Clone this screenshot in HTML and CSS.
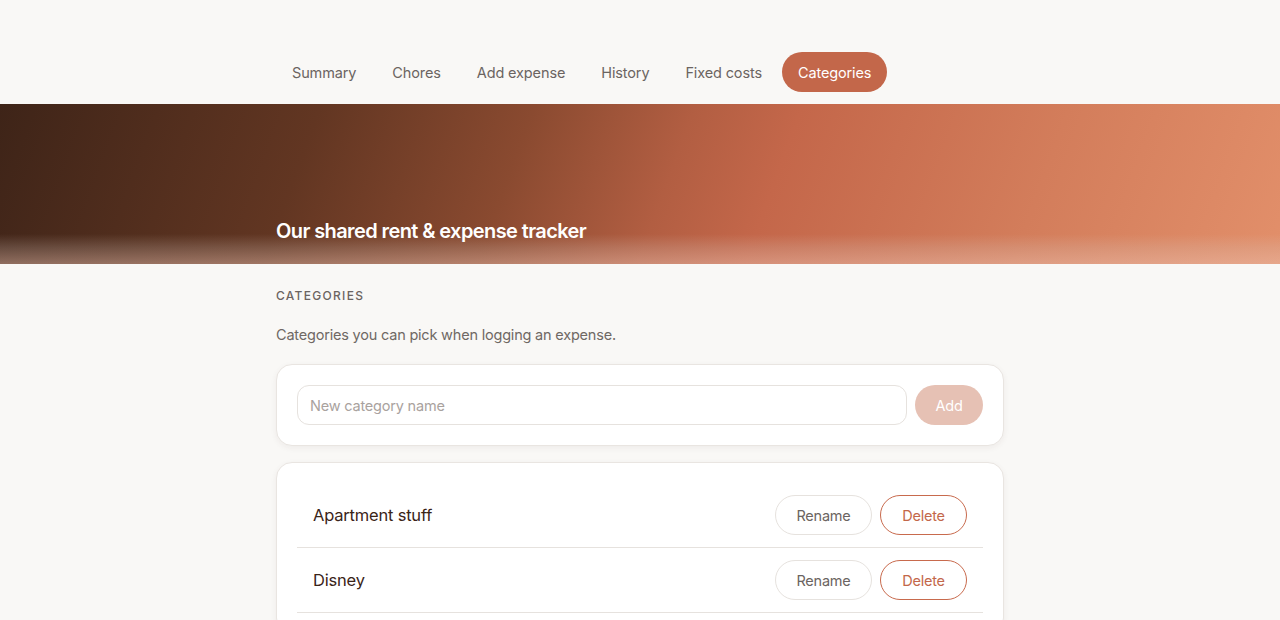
FILE: index.html
```html
<!DOCTYPE html>
<html lang="en">
<head>
    <meta charset="UTF-8">
    <meta name="viewport" content="width=device-width, initial-scale=1.0">
    <title>Rent &amp; Expenses</title>
    <link rel="stylesheet" href="styles.css">
</head>
<body>

    <!-- Top navigation -->
    <header class="topbar">
        <nav class="tabs">
            <a href="#" class="tab">Summary</a>
            <a href="#" class="tab">Chores</a>
            <a href="#" class="tab">Add expense</a>
            <a href="#" class="tab">History</a>
            <a href="#" class="tab">Fixed costs</a>
            <a href="#" class="tab active">Categories</a>
        </nav>
    </header>

    <!-- Hero -->
    <section class="hero">
        <div class="hero-inner">
            <h1>Our shared rent &amp; expense tracker</h1>
        </div>
    </section>

    <!-- Categories -->
    <main class="content">
        <h2 class="section-label">Categories</h2>
        <p class="section-desc">Categories you can pick when logging an expense.</p>

        <div class="card add-card">
            <input type="text" class="text-input" placeholder="New category name">
            <button class="btn btn-add">Add</button>
        </div>

        <div class="card list-card">
            <ul class="cat-list">
                <li class="cat-row">
                    <span class="cat-name">Apartment stuff</span>
                    <div class="cat-actions">
                        <button class="btn btn-ghost">Rename</button>
                        <button class="btn btn-danger">Delete</button>
                    </div>
                </li>
                <li class="cat-row">
                    <span class="cat-name">Disney</span>
                    <div class="cat-actions">
                        <button class="btn btn-ghost">Rename</button>
                        <button class="btn btn-danger">Delete</button>
                    </div>
                </li>
            </ul>
        </div>
    </main>

</body>
</html>
```

FILE: styles.css
```css
/* Warm off-white theme */
body {
    background-color: #f9f8f6;
    color: #3a2a22;
    font-family: Inter, "Noto Sans", sans-serif;
    margin: 0;
}

/* Top navigation */
.topbar {
    height: 104px;
    box-sizing: border-box;
    padding-top: 52px;
}

.tabs {
    width: 728px;
    margin: 0 auto;
    display: flex;
    gap: 4px;
}

.tab {
    height: 40px;
    line-height: 41px;
    padding: 0 16px;
    border-radius: 20px;
    color: #6b6461;
    font-size: 14.5px;
    letter-spacing: -0.13px;
    text-decoration: none;
}

.tab.active {
    background-color: #c3674a;
    color: #fff;
}

/* Hero */
.hero {
    height: 160px;
    position: relative;
    background: linear-gradient(110deg, #3e2418 0%, #623622 24%, #8a4a30 40%, #b25e42 52%, #c4674a 60%, #d37d5b 80%, #e28f6a 100%);
}

.hero::after {
    content: "";
    position: absolute;
    left: 0;
    right: 0;
    bottom: 0;
    height: 30px;
    background: linear-gradient(180deg, rgba(220, 200, 190, 0) 0%, rgba(220, 200, 190, 0.22) 45%, rgba(236, 196, 180, 0.45) 100%);
}

.hero-inner {
    width: 728px;
    margin: 0 auto;
    height: 100%;
    display: flex;
    align-items: flex-end;
}

.hero h1 {
    margin: 0 0 21px;
    color: #fff;
    font-size: 20px;
    font-weight: 600;
    letter-spacing: -0.6px;
    position: relative;
    z-index: 1;
}

/* Content */
.content {
    width: 728px;
    margin: 0 auto;
    padding-top: 24px;
}

.section-label {
    margin: 0;
    font-size: 12px;
    font-weight: 500;
    letter-spacing: 1.3px;
    text-transform: uppercase;
    color: #6b6461;
}

.section-desc {
    margin: 23px 0 21px;
    font-size: 14.5px;
    letter-spacing: -0.2px;
    color: #6f6864;
}

.card {
    background: #fff;
    border: 1px solid #e9e5e1;
    border-radius: 16px;
    box-shadow: 0 2px 6px rgba(60, 40, 30, 0.06);
    padding: 20px;
    margin-bottom: 16px;
}

.add-card {
    display: flex;
    gap: 8px;
}

.text-input {
    flex: 1;
    height: 40px;
    box-sizing: border-box;
    border: 1px solid #e6e2de;
    border-radius: 12px;
    padding: 0 12px;
    font-family: inherit;
    font-size: 14.5px;
    letter-spacing: -0.2px;
    color: #3a2a22;
}

.text-input::placeholder {
    color: #a9a29e;
}

/* Buttons */
.btn {
    height: 40px;
    border-radius: 20px;
    font-family: inherit;
    font-size: 14.5px;
    letter-spacing: -0.2px;
    cursor: pointer;
    background: #fff;
}

.btn-add {
    width: 68px;
    border: none;
    background-color: #e6c1b4;
    color: #fff;
}

.btn-ghost {
    width: 97px;
    border: 1px solid #e6e2de;
    color: #6b6461;
}

.btn-danger {
    width: 87px;
    border: 1px solid #c86a4d;
    color: #c3674a;
}

/* Category list */
.cat-list {
    list-style: none;
    margin: 0;
    padding: 0;
}

.cat-row {
    display: flex;
    align-items: center;
    justify-content: space-between;
    padding: 12px 16px;
    border-bottom: 1px solid #e6e2de;
}

.cat-name {
    font-size: 16.5px;
    letter-spacing: -0.2px;
    color: #3a2418;
}

.cat-actions {
    display: flex;
    gap: 8px;
}
```
